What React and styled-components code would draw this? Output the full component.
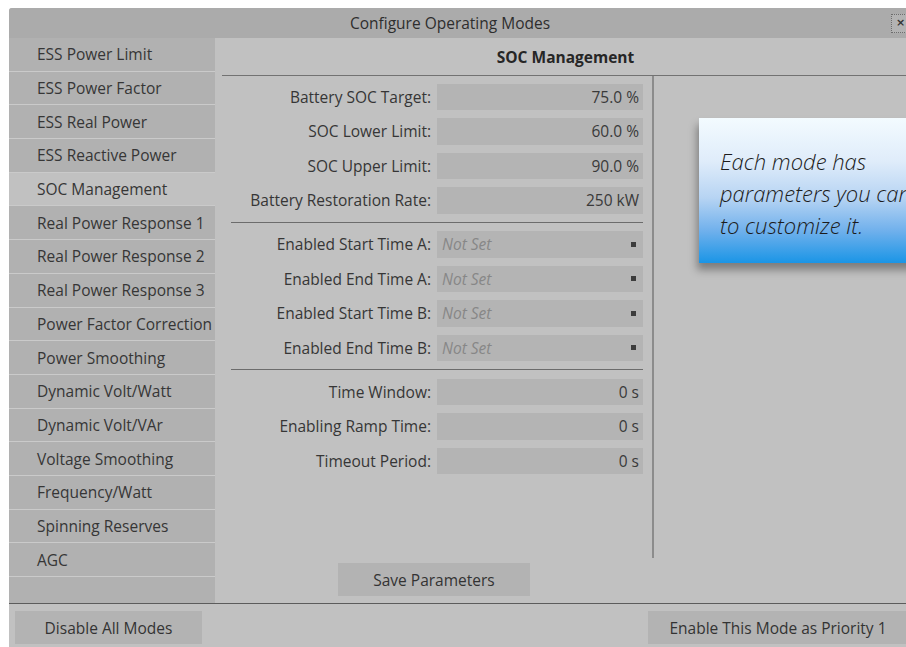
import React from "react";
import styled, { createGlobalStyle } from "styled-components";

const Global = createGlobalStyle`
  html, body {
    margin: 0;
    padding: 0;
    background: #ffffff;
    overflow: hidden;
  }
  body {
    font-family: "Open Sans", "Noto Sans", "Liberation Sans", sans-serif;
    color: #333333;
  }
`;

const Page = styled.div`
  width: 906px;
  height: 647px;
  overflow: hidden;
  padding: 8px 0 0 9px;
  box-sizing: border-box;
`;

const Window = styled.div`
  position: relative;
  width: 900px;
  height: 660px;
  background: #c1c1c1;
  display: flex;
  flex-direction: column;
  border-top-left-radius: 3px;
`;

const TitleBar = styled.div`
  height: 30px;
  background: #ababab;
  display: flex;
  align-items: center;
  flex-shrink: 0;
  border-top-left-radius: 3px;
`;

const Title = styled.div`
  flex: 1;
  text-align: center;
  font-size: 15.5px;
  color: #2e2e2e;
`;

const CloseButton = styled.button`
  width: 20px;
  height: 19px;
  margin-right: -2px;
  padding: 0;
  background: #b3b3b3;
  border: 1px dotted #6d6d6d;
  font-family: "DejaVu Sans", sans-serif;
  font-size: 11px;
  font-weight: bold;
  line-height: 16px;
  color: #333;
  text-align: left;
  padding-left: 4px;
`;

const Content = styled.div`
  display: flex;
  height: 565px;
  flex-shrink: 0;
`;

const Sidebar = styled.div`
  width: 206px;
  display: flex;
  flex-direction: column;
  flex-shrink: 0;
`;

const ModeItem = styled.div`
  height: 32.7px;
  border-bottom: 1px solid #cacaca;
  background: ${(p) => (p.$active ? "#c1c1c1" : "#b1b1b1")};
  display: flex;
  align-items: center;
  padding-left: 28px;
  font-size: 15.5px;
  color: #363636;
  white-space: nowrap;
  flex-shrink: 0;
`;

const SidebarFiller = styled.div`
  flex: 1;
  background: #b1b1b1;
`;

const Main = styled.div`
  flex: 1;
  display: flex;
  flex-direction: column;
  min-width: 0;
`;

const Header = styled.div`
  height: 37px;
  margin-left: 7px;
  border-bottom: 1px solid #727272;
  display: flex;
  align-items: center;
  justify-content: center;
  font-size: 15.5px;
  font-weight: 700;
  color: #262626;
  flex-shrink: 0;
`;

const Body = styled.div`
  flex: 1;
  display: flex;
  min-height: 0;
`;

const FormColumn = styled.div`
  width: 412px;
  margin-left: 7px;
  padding: 7.5px 9px 0;
  border-right: 2px solid #8c8c8c;
  display: flex;
  flex-direction: column;
`;

const Row = styled.div`
  display: grid;
  grid-template-columns: 1fr 206px;
  column-gap: 6px;
  height: 26.5px;
  margin-bottom: 8px;
  align-items: center;
`;

const Label = styled.div`
  text-align: right;
  font-size: 15.5px;
  color: #363636;
  white-space: nowrap;
`;

const Field = styled.div`
  height: 100%;
  background: #b4b4b4;
  display: flex;
  align-items: center;
  justify-content: ${(p) => (p.$empty ? "space-between" : "flex-end")};
  padding: 0 ${(p) => (p.$empty ? "7px" : "4px")} 0 5px;
  font-size: 15.5px;
  color: #3a3a3a;
`;

const Placeholder = styled.span`
  font-style: italic;
  color: #878787;
`;

const PickerMark = styled.span`
  width: 5px;
  height: 5px;
  background: #3c3c3c;
`;

const Divider = styled.div`
  height: 1px;
  background: #6c6c6c;
  margin: 0 0 8.5px;
`;

const Footer = styled.div`
  height: 45px;
  padding: 5px 0 0 123px;
  flex-shrink: 0;
  box-sizing: border-box;
`;

const Button = styled.button`
  height: 33px;
  width: ${(p) => p.$width}px;
  background: #b3b3b3;
  border: none;
  font-family: inherit;
  font-size: 15.5px;
  color: #333;
  padding: 0;
`;

const BottomBar = styled.div`
  border-top: 1px solid #5c5c5c;
  display: flex;
  justify-content: space-between;
  padding: 7px 1px 0 6px;
`;

const Callout = styled.div`
  position: absolute;
  left: 690px;
  top: 110px;
  width: 290px;
  height: 145px;
  box-sizing: border-box;
  padding: 27px 0 0 21px;
  background: linear-gradient(
    to bottom,
    #f3fbff 0%,
    #dfecfa 30%,
    #b7d4f3 55%,
    #6fb0ec 78%,
    #1a95e6 100%
  );
  box-shadow: -2px 7px 8px rgba(0, 0, 0, 0.35);
  font-size: 22px;
  font-style: italic;
  font-weight: 300;
  line-height: 32px;
  color: #1c1c1c;
  white-space: nowrap;
`;

const modes = [
  "ESS Power Limit",
  "ESS Power Factor",
  "ESS Real Power",
  "ESS Reactive Power",
  "SOC Management",
  "Real Power Response 1",
  "Real Power Response 2",
  "Real Power Response 3",
  "Power Factor Correction",
  "Power Smoothing",
  "Dynamic Volt/Watt",
  "Dynamic Volt/VAr",
  "Voltage Smoothing",
  "Frequency/Watt",
  "Spinning Reserves",
  "AGC",
];

const groups = [
  [
    ["Battery SOC Target:", "75.0 %"],
    ["SOC Lower Limit:", "60.0 %"],
    ["SOC Upper Limit:", "90.0 %"],
    ["Battery Restoration Rate:", "250 kW"],
  ],
  [
    ["Enabled Start Time A:", null],
    ["Enabled End Time A:", null],
    ["Enabled Start Time B:", null],
    ["Enabled End Time B:", null],
  ],
  [
    ["Time Window:", "0 s"],
    ["Enabling Ramp Time:", "0 s"],
    ["Timeout Period:", "0 s"],
  ],
];

export default function App() {
  const active = "SOC Management";
  return (
    <Page>
      <Global />
      <Window>
        <TitleBar>
          <Title>Configure Operating Modes</Title>
          <CloseButton>×</CloseButton>
        </TitleBar>
        <Content>
          <Sidebar>
            {modes.map((m) => (
              <ModeItem key={m} $active={m === active}>
                {m}
              </ModeItem>
            ))}
            <SidebarFiller />
          </Sidebar>
          <Main>
            <Header>SOC Management</Header>
            <Body>
              <FormColumn>
                {groups.map((g, gi) => (
                  <React.Fragment key={gi}>
                    {gi > 0 && <Divider />}
                    {g.map(([label, value]) => (
                      <Row key={label}>
                        <Label>{label}</Label>
                        {value === null ? (
                          <Field $empty>
                            <Placeholder>Not Set</Placeholder>
                            <PickerMark />
                          </Field>
                        ) : (
                          <Field>{value}</Field>
                        )}
                      </Row>
                    ))}
                  </React.Fragment>
                ))}
              </FormColumn>
            </Body>
            <Footer>
              <Button $width={192}>Save Parameters</Button>
            </Footer>
          </Main>
        </Content>
        <BottomBar>
          <Button $width={187}>Disable All Modes</Button>
          <Button $width={260}>Enable This Mode as Priority 1</Button>
        </BottomBar>
        <Callout>
          Each mode has
          <br />
          parameters you can adjust
          <br />
          to customize it.
        </Callout>
      </Window>
    </Page>
  );
}
